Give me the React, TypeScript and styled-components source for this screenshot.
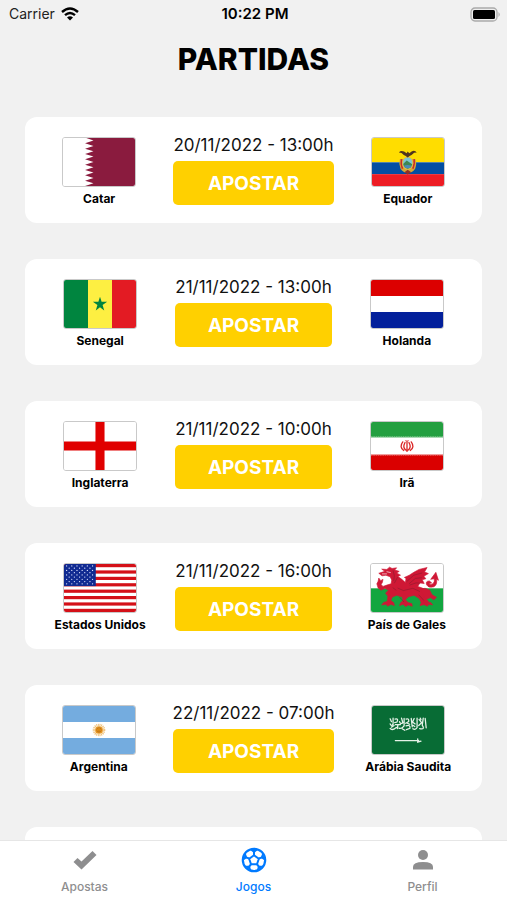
import React from "react";
import styled, { createGlobalStyle } from "styled-components";

const GlobalStyle = createGlobalStyle`
  *, *::before, *::after { box-sizing: border-box; }
  body {
    margin: 0;
    background: #f1f1f1;
    color: #000;
    font-family: Inter, "Liberation Sans", sans-serif;
  }
`;

const Screen = styled.div`
  display: flex;
  flex-direction: column;
  height: 100vh;
`;

const StatusBar = styled.header`
  display: grid;
  grid-template-columns: 1fr auto 1fr;
  align-items: center;
  height: 28px;
  padding: 0 6px 0 9px;
  font-size: 14px;
  line-height: 20px;
`;

const Carrier = styled.div`
  display: flex;
  align-items: center;
  gap: 6px;
  color: #222;
`;

const Clock = styled.time`
  font-size: 15px;
  font-weight: 600;
`;

const BatteryIcon = styled.svg`
  justify-self: end;
`;

const Title = styled.h1`
  margin: 12px 0 0;
  font-size: 30px;
  line-height: 38px;
  font-weight: 800;
  text-align: center;
`;

const MatchList = styled.main`
  flex: 1;
  min-height: 0;
  display: flex;
  flex-direction: column;
  gap: 36px;
  margin-top: 39px;
  padding: 0 25px;
  overflow-y: auto;
  scrollbar-width: none;
`;

const Card = styled.article`
  flex: none;
  display: grid;
  grid-template-columns: 1fr auto 1fr;
  min-height: 106px;
  padding: 20px 0 16px;
  border-radius: 12px;
  background: #fff;
`;

const Team = styled.div`
  display: flex;
  flex-direction: column;
  align-items: center;
  gap: 5px;
`;

const TeamName = styled.span`
  font-size: 12px;
  line-height: 14px;
  font-weight: 700;
  white-space: nowrap;
`;

const FlagFrame = styled.svg`
  display: block;
  width: 74px;
  height: 50px;
  border: 1px solid #c9c9c9;
  border-radius: 3px;
`;

const Fixture = styled.div`
  display: flex;
  flex-direction: column;
  gap: 6px;
  margin-top: -2px;
`;

const Kickoff = styled.time`
  font-size: 17px;
  line-height: 20px;
  color: #111;
  text-align: center;
  white-space: nowrap;
`;

const BetButton = styled.button`
  height: 44px;
  padding: 0;
  border: 0;
  border-radius: 5px;
  background: #ffd000;
  color: #fff;
  font: inherit;
  font-size: 19px;
  font-weight: 700;
  cursor: pointer;
`;

const TabBar = styled.nav`
  flex: none;
  display: grid;
  grid-template-columns: repeat(3, 1fr);
  height: 60px;
  border-top: 1px solid #e6e6e6;
  background: #fff;
`;

const Tab = styled.a<{ $active?: boolean }>`
  display: flex;
  flex-direction: column;
  align-items: center;
  gap: 6px;
  padding-top: 6px;
  color: ${(p) => (p.$active ? "#007aff" : "#8e8e8f")};
  font-size: 12px;
  line-height: 16px;
  font-weight: 500;
  text-decoration: none;
`;

type FlagId =
  | "qatar" | "ecuador" | "senegal" | "netherlands" | "england"
  | "iran" | "usa" | "wales" | "argentina" | "saudi";

const rows = (n: number) => Array.from({ length: n }, (_, i) => i);

const flagArt: Record<FlagId, React.ReactNode> = {
  qatar: (
    <>
      <rect width="222" height="150" fill="#fff" />
      <path
        fill="#8a1b3e"
        d={`M222 0H72${rows(9).map((i) => `L94 ${(i * 150) / 9 + 8} L68 ${((i + 1) * 150) / 9}`).join("")}H222Z`}
      />
    </>
  ),
  ecuador: (
    <>
      <rect width="222" height="76" fill="#ffdd00" />
      <rect y="76" width="222" height="37" fill="#034ea2" />
      <rect y="113" width="222" height="37" fill="#ed1c24" />
      <path d="M86 66Q82 80 88 96Q96 108 110 110Q126 108 133 96Q139 80 134 66Z" fill="#d7a531" />
      <path d="M91 66Q88 82 94 96M130 66Q132 82 126 96" stroke="#c92a2a" strokeWidth="5" fill="none" />
      <ellipse cx="110" cy="79" rx="17" ry="21" fill="#d9bd52" />
      <ellipse cx="110" cy="78" rx="14" ry="17" fill="#7cc5d5" />
      <path d="M96 81L107 70L124 82Q121 95 110 96Q99 94 96 81Z" fill="#3e8754" />
      <path d="M98 87Q110 82 122 87L117 94H104Z" fill="#4a8bb8" />
      <path d="M83 45Q88 38 99 42L107 48L110 42L115 48L122 42Q132 37 138 45L130 46L122 53L116 56L110 61L104 56L98 53L91 47Z" fill="#51351d" />
      <path d="M100 107L110 99L121 107L110 114Z" fill="#8f3128" />
    </>
  ),
  senegal: (
    <>
      <rect width="74" height="150" fill="#00853f" />
      <rect x="74" width="74" height="150" fill="#fdef42" />
      <rect x="148" width="74" height="150" fill="#e31b23" />
      <path d="M111 52L116 68H133L119 78L124 95L111 85L98 95L103 78L89 68H106Z" fill="#00853f" />
    </>
  ),
  netherlands: (
    <>
      <rect width="222" height="150" fill="#fff" />
      <rect width="222" height="50" fill="#dc0000" />
      <rect y="100" width="222" height="50" fill="#03209b" />
    </>
  ),
  england: (
    <>
      <rect width="222" height="150" fill="#fff" />
      <path d="M97 0H125V61H222V89H125V150H97V89H0V61H97Z" fill="#e00000" />
    </>
  ),
  iran: (
    <>
      <rect width="222" height="150" fill="#fff" />
      <rect width="222" height="48" fill="#239f40" />
      <rect y="102" width="222" height="48" fill="#da0000" />
      <path d="M0 47H222" stroke="#a6d8b0" strokeWidth="4" strokeDasharray="5 2" />
      <path d="M0 103H222" stroke="#f09a9a" strokeWidth="4" strokeDasharray="5 2" />
      <g fill="none" stroke="#da2525" strokeWidth="4" strokeLinecap="round">
        <path d="M111 62V92M98 62Q86 78 101 89M124 62Q136 78 121 89M105 64Q96 80 108 88M117 64Q126 80 114 88" />
        <path d="M107 59Q111 62 115 59" strokeWidth="3" />
      </g>
    </>
  ),
  usa: (
    <>
      <rect width="222" height="150" fill="#fff" />
      {rows(8).map((i) => (
        <rect key={i} y={i * 20} width="222" height="10" fill="#d41018" />
      ))}
      <rect width="98" height="69" fill="#102a91" />
      {rows(9).map((r) =>
        rows(r % 2 ? 5 : 6).map((c) => (
          <circle key={`${r}-${c}`} cx={8 + c * 16 + (r % 2) * 8} cy={6 + r * 7} r="2" fill="#dfe5ff" />
        )),
      )}
    </>
  ),
  wales: (
    <>
      <rect width="222" height="76" fill="#fff" />
      <rect y="76" width="222" height="74" fill="#12a640" />
      <g fill="#cf1835" stroke="#cf1835" strokeWidth="2" strokeLinejoin="round">
        <path d="M24 29L43 23L33 16L49 17L57 10L65 14L79 12L73 19L87 23L79 28L91 35L83 39L95 48L106 58L108 45L103 42L118 35L132 26L148 17L173 11L165 25L177 30L163 38L169 46L158 49L164 61L151 59L144 70L160 76L172 89L174 103L162 112L169 120L184 120L190 128L178 126L174 132L164 127L151 130L155 121L149 108L133 98L116 102L106 112L114 120L126 124L127 132L115 128L107 133L99 126L88 130L92 120L99 115L96 103L79 98L66 103L61 114L70 121L72 130L61 126L52 132L46 126L33 128L39 120L50 117L52 101L45 91L54 82L43 76L31 82L22 75L18 62L22 54L24 44L30 52L37 48L35 58L31 64L37 70L49 66L62 62L64 50L59 40L46 35L34 37Z" />
        <path d="M184 48L200 26L208 51L202 48Q205 65 194 71Q177 76 171 64Q168 53 180 53L187 59L178 61Q184 67 192 61Q197 55 195 46Z" />
        <path d="M151 78Q168 72 181 82L188 96L202 104L194 112L183 105L171 110L178 119L166 123L158 111L165 102Z" />
      </g>
      <g fill="none" stroke="#791b2b" strokeWidth="1.5">
        <path d="M68 20Q75 38 70 53M82 41L72 60M110 55L132 35L158 28M117 62L137 45L157 43M119 66L139 59L152 60M82 75L100 83L129 76L151 86M67 74L78 82M88 104L102 119M147 96L163 114" />
      </g>
      <g fill="none" stroke="#fff" strokeWidth="2">
        <path d="M48 24L61 27M34 31L49 31" />
      </g>
    </>
  ),
  argentina: (
    <>
      <rect width="222" height="150" fill="#74acdf" />
      <rect y="50" width="222" height="50" fill="#fff" />
      <circle cx="111" cy="75" r="16" fill="none" stroke="#f0c27b" strokeWidth="7" strokeDasharray="3 2" />
      <circle cx="111" cy="75" r="12" fill="#e99b24" />
      <circle cx="111" cy="75" r="7" fill="#ef9b13" stroke="#a85d21" strokeWidth="2" />
      <path d="M108 73H109M113 73H114M109 78H113" stroke="#854516" strokeWidth="2" />
    </>
  ),
  saudi: (
    <>
      <rect width="222" height="150" fill="#086c35" />
      <g fill="none" stroke="#e6f2e8" strokeWidth="4" strokeLinecap="round">
        <path d="M56 40L60 49M65 38V57Q58 64 56 56M71 41Q83 38 77 50L70 52M56 70Q65 78 75 67M72 58H88M91 38L95 52Q88 58 85 49M99 39V62Q91 73 83 69M105 41Q115 37 113 49L104 54M105 62Q119 57 117 70L106 74M121 39L124 65M130 39L125 50L133 56M139 38V67Q134 76 126 71M145 42L153 52L144 61M158 38L155 60Q165 75 147 71M164 39L167 68M60 66L68 61M80 59L78 71M93 71L101 76M127 61L132 64M149 38L151 43M109 54L116 57" />
        <path d="M72 108H144M141 103V113L151 110" />
      </g>
    </>
  ),
};

function Flag({ id, label }: { id: FlagId; label: string }) {
  return (
    <FlagFrame viewBox="0 0 222 150" preserveAspectRatio="none" role="img" aria-label={label}>
      {flagArt[id]}
    </FlagFrame>
  );
}

type Side = { name: string; flag: FlagId };
type Match = { date: string; home: Side; away: Side };

const matches: Match[] = [
  { date: "20/11/2022 - 13:00h", home: { name: "Catar", flag: "qatar" }, away: { name: "Equador", flag: "ecuador" } },
  { date: "21/11/2022 - 13:00h", home: { name: "Senegal", flag: "senegal" }, away: { name: "Holanda", flag: "netherlands" } },
  { date: "21/11/2022 - 10:00h", home: { name: "Inglaterra", flag: "england" }, away: { name: "Irã", flag: "iran" } },
  { date: "21/11/2022 - 16:00h", home: { name: "Estados Unidos", flag: "usa" }, away: { name: "País de Gales", flag: "wales" } },
  { date: "22/11/2022 - 07:00h", home: { name: "Argentina", flag: "argentina" }, away: { name: "Arábia Saudita", flag: "saudi" } },
];

function TeamBadge({ name, flag }: Side) {
  return (
    <Team>
      <Flag id={flag} label={name} />
      <TeamName>{name}</TeamName>
    </Team>
  );
}

function MatchCard({ date, home, away }: Match) {
  return (
    <Card>
      <TeamBadge {...home} />
      <Fixture>
        <Kickoff>{date}</Kickoff>
        <BetButton type="button">APOSTAR</BetButton>
      </Fixture>
      <TeamBadge {...away} />
    </Card>
  );
}

function WifiIcon() {
  return (
    <svg width="18" height="14" viewBox="0 0 18 14" fill="none" stroke="#000" strokeWidth="2.4" aria-hidden="true">
      <path d="M1 5Q9 -2 17 5M4 8.2Q9 3.8 14 8.2" />
      <path d="M9 13.5L6 10.5Q9 8 12 10.5Z" fill="#000" stroke="none" />
    </svg>
  );
}

function CheckIcon() {
  return (
    <svg width="26" height="26" viewBox="0 0 26 26" aria-hidden="true">
      <path d="M1.500 15L5.500 11L9.500 14.500L20.500 4L24.500 8L9.500 22.500Z" fill="currentColor" />
    </svg>
  );
}

function BallIcon() {
  return (
    <svg width="26" height="26" viewBox="0 0 26 26" fill="none" stroke="currentColor" aria-hidden="true">
      <circle cx="13" cy="13" r="11.2" strokeWidth="2.2" />
      <path d="M13 8.200L17.800 11.700L16 17.200H10L8.200 11.700Z" strokeWidth="2" strokeLinejoin="round" />
      {[0, 72, 144, 216, 288].map((angle) => (
        <g key={angle} transform={`rotate(${angle} 13 13)`}>
          <path d="M13 8V4.500" strokeWidth="2" />
          <path d="M8.500 2.500H17.500L13 6Z" fill="currentColor" stroke="none" />
        </g>
      ))}
    </svg>
  );
}

function PersonIcon() {
  return (
    <svg width="26" height="26" viewBox="0 0 26 26" fill="currentColor" aria-hidden="true">
      <circle cx="13" cy="8" r="5" />
      <path d="M3 22.500V20Q3 15 13 15T23 20V22.500Z" />
    </svg>
  );
}

export default function App() {
  return (
    <>
      <GlobalStyle />
      <Screen>
        <StatusBar>
          <Carrier>
            Carrier
            <WifiIcon />
          </Carrier>
          <Clock>10:22 PM</Clock>
          <BatteryIcon width="31" height="15" viewBox="0 0 31 15" aria-label="Bateria">
            <rect x="1" y="1" width="26" height="13" rx="4" fill="#eee" stroke="#aaa" strokeWidth="1.3" />
            <rect x="3" y="3" width="22" height="9" rx="1.5" />
            <path d="M28.500 5Q31 7.500 28.500 10Z" fill="#aaa" />
          </BatteryIcon>
        </StatusBar>
        <Title>PARTIDAS</Title>
        <MatchList>
          {matches.map((match) => (
            <MatchCard key={match.home.name} {...match} />
          ))}
          <Card aria-hidden="true" />
        </MatchList>
        <TabBar>
          <Tab href="#apostas">
            <CheckIcon />
            Apostas
          </Tab>
          <Tab href="#jogos" $active aria-current="page">
            <BallIcon />
            Jogos
          </Tab>
          <Tab href="#perfil">
            <PersonIcon />
            Perfil
          </Tab>
        </TabBar>
      </Screen>
    </>
  );
}
